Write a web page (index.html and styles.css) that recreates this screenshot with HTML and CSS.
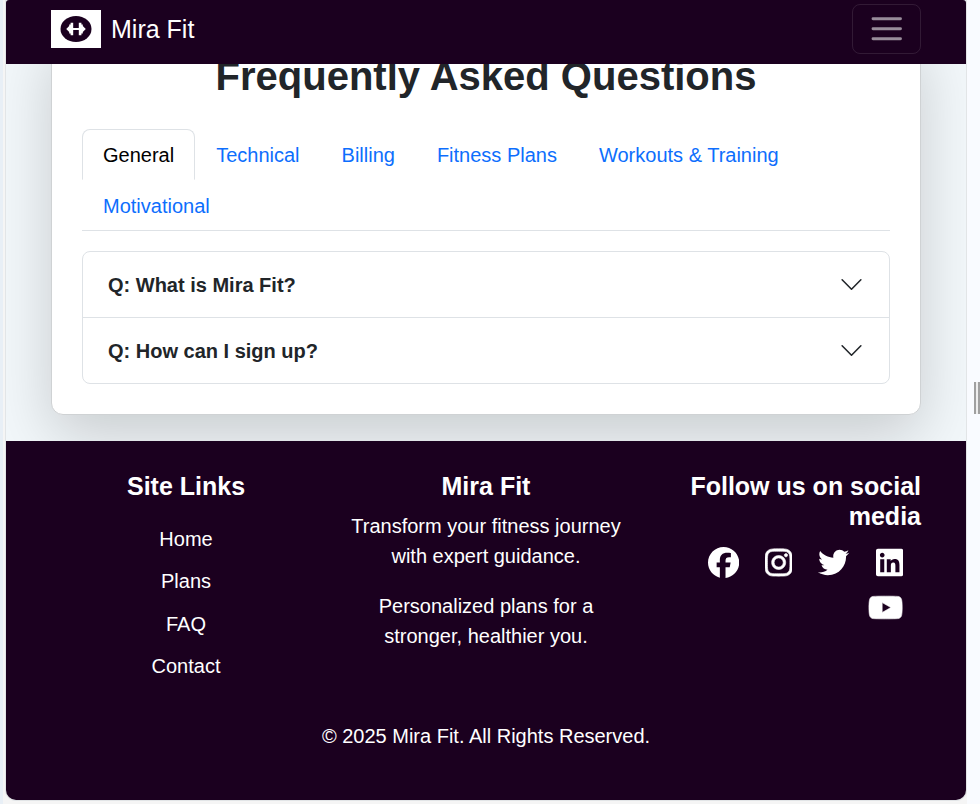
FILE: index.html
```html
<!DOCTYPE html>
<html lang="en">
<head>
<meta charset="utf-8">
<title>Mira Fit</title>
<link rel="stylesheet" href="styles.css">
</head>
<body>
<div class="frame">
  <header class="navbar">
    <a class="brand"><span class="logo"><svg viewBox="0 0 50 38" width="50" height="38"><ellipse cx="25" cy="19" rx="15.5" ry="13"/><path class="bell" d="M15.2 19l3-3v-1.5h1.4v-1.7h2.6v5.2h5.6v-5.2h2.6v1.7h1.4v1.5l3 3-3 3v1.5h-1.4v1.7h-2.6v-5.2h-5.6v5.2h-2.6v-1.7h-1.4v-1.5z"/></svg></span><span>Mira Fit</span></a>
    <button class="toggler" aria-label="Menu"><svg viewBox="0 0 30 30" width="37.5" height="37.5"><path d="M4 7h22M4 15h22M4 23h22"/></svg></button>
  </header>
  <main class="content">
    <section class="card">
      <h2>Frequently Asked Questions</h2>
      <nav class="tabs"><a class="tab active">General</a><a class="tab">Technical</a><a class="tab">Billing</a><a class="tab">Fitness Plans</a><a class="tab">Workouts &amp; Training</a><a class="tab">Motivational</a></nav>
      <div class="accordion">
        <div class="item"><span>Q: What is Mira Fit?</span><svg viewBox="0 0 16 16" width="25" height="25"><path d="m2 5 6 6 6-6"/></svg></div>
        <div class="item"><span>Q: How can I sign up?</span><svg viewBox="0 0 16 16" width="25" height="25"><path d="m2 5 6 6 6-6"/></svg></div>
      </div>
    </section>
  </main>
  <footer class="footer">
    <div class="columns">
      <div class="col">
        <h5>Site Links</h5>
        <ul><li>Home</li><li>Plans</li><li>FAQ</li><li>Contact</li></ul>
      </div>
      <div class="col">
        <h5>Mira Fit</h5>
        <p>Transform your fitness journey with expert guidance.</p>
        <p>Personalized plans for a stronger, healthier you.</p>
      </div>
      <div class="col social">
        <h5>Follow us on social media</h5>
        <div class="icons">
          <svg viewBox="0 0 512 512" width="31.25"><path d="M512 256C512 114.6 397.4 0 256 0S0 114.6 0 256C0 376 82.7 476.8 194.2 504.5V334.2H141.4V256h52.8V222.3c0-87.1 39.4-127.5 125-127.5 16.2 0 44.2 3.2 55.7 6.4V172c-6-.6-16.5-1-29.6-1-42 0-58.2 15.9-58.2 57.2V256h83.6l-14.4 78.2H287V510.1C413.8 494.8 512 386.9 512 256z"/></svg>
          <svg class="bold" viewBox="0 0 448 512" width="27.34"><path d="M224.1 141c-63.6 0-114.9 51.3-114.9 114.9s51.3 114.9 114.9 114.9S339 319.5 339 255.9 287.7 141 224.1 141zm0 189.6c-41.1 0-74.7-33.5-74.7-74.7s33.5-74.7 74.7-74.7 74.7 33.5 74.7 74.7-33.6 74.7-74.7 74.7zm146.4-194.3c0 14.9-12 26.8-26.8 26.8-14.9 0-26.8-12-26.8-26.8s12-26.8 26.8-26.8 26.8 12 26.8 26.8zm76.1 27.2c-1.7-35.9-9.9-67.7-36.2-93.9-26.2-26.2-58-34.4-93.9-36.2-37-2.1-147.9-2.1-184.9 0-35.8 1.7-67.6 9.9-93.9 36.1s-34.4 58-36.2 93.9c-2.1 37-2.1 147.9 0 184.9 1.7 35.9 9.9 67.7 36.2 93.9s58 34.4 93.9 36.2c37 2.1 147.9 2.1 184.9 0 35.9-1.7 67.7-9.9 93.9-36.2 26.2-26.2 34.4-58 36.2-93.9 2.1-37 2.1-147.8 0-184.8zM398.8 388c-7.8 19.6-22.9 34.7-42.6 42.6-29.5 11.7-99.5 9-132.1 9s-102.7 2.6-132.1-9c-19.6-7.8-34.7-22.9-42.6-42.6-11.7-29.5-9-99.5-9-132.1s-2.6-102.7 9-132.1c7.8-19.6 22.9-34.7 42.6-42.6 29.5-11.7 99.5-9 132.1-9s102.7-2.6 132.1 9c19.6 7.8 34.7 22.9 42.6 42.6 11.7 29.5 9 99.5 9 132.1s2.7 102.7-9 132.1z"/></svg>
          <svg viewBox="0 0 512 512" width="31.25"><path d="M459.37 151.716c.325 4.548.325 9.097.325 13.645 0 138.72-105.583 298.558-298.558 298.558-59.452 0-114.68-17.219-161.137-47.106 8.447.974 16.568 1.299 25.34 1.299 49.055 0 94.213-16.568 130.274-44.832-46.132-.975-84.792-31.188-98.112-72.772 6.498.974 12.995 1.624 19.818 1.624 9.421 0 18.843-1.3 27.614-3.573-48.081-9.747-84.143-51.98-84.143-102.985v-1.299c13.969 7.797 30.214 12.67 47.431 13.319-28.264-18.843-46.781-51.005-46.781-87.391 0-19.492 5.197-37.36 14.294-52.954 51.655 63.675 129.3 105.258 216.365 109.807-1.624-7.797-2.599-15.918-2.599-24.04 0-57.828 46.782-104.934 104.934-104.934 30.213 0 57.502 12.67 76.67 33.137 23.715-4.548 46.456-13.32 66.599-25.34-7.798 24.366-24.366 44.833-46.132 57.827 21.117-2.273 41.584-8.122 60.426-16.243-14.292 20.791-32.161 39.308-52.628 54.253z"/></svg>
          <svg viewBox="0 0 448 512" width="27.34"><path d="M416 32H31.9C14.3 32 0 46.5 0 64.3v383.4C0 465.5 14.3 480 31.9 480H416c17.6 0 32-14.5 32-32.3V64.3c0-17.8-14.4-32.3-32-32.3zM135.4 416H69V202.2h66.5V416zm-33.2-243c-21.3 0-38.5-17.3-38.5-38.5S80.9 96 102.2 96c21.2 0 38.5 17.3 38.5 38.5 0 21.3-17.2 38.5-38.5 38.5zm282.1 243h-66.4V312c0-24.8-.5-56.7-34.5-56.7-34.6 0-39.9 27-39.9 54.9V416h-66.4V202.2h63.7v29.2h.9c8.9-16.8 30.6-34.5 62.9-34.5 67.2 0 79.7 44.3 79.7 101.9V416z"/></svg>
          <svg class="bold" viewBox="0 0 576 512" width="35.16"><path d="M549.655 124.083c-6.281-23.65-24.787-42.276-48.284-48.597C458.781 70 288 70 288 70S117.22 70 74.629 75.486c-23.497 6.322-42.003 24.947-48.284 48.597-11.412 42.867-11.412 132.305-11.412 132.305s0 89.438 11.412 132.305c6.281 23.65 24.787 41.5 48.284 47.821C117.22 442 288 442 288 442s170.78 0 213.371-5.486c23.497-6.321 42.003-24.171 48.284-47.821 11.412-42.867 11.412-132.305 11.412-132.305s0-89.438-11.412-132.305zm-317.51 213.508V175.185l142.739 81.205-142.739 81.201z"/></svg>
        </div>
      </div>
    </div>
    <p class="copyright">© 2025 Mira Fit. All Rights Reserved.</p>
  </footer>
</div>
<div class="handle"></div>
</body>
</html>
```
FILE: styles.css
```css
* { box-sizing: border-box; }
html, body { height: 100%; }
body {
  margin: 0;
  overflow: hidden;
  background: linear-gradient(to right, #e8eff6 0 3px, #f5f5f5 3px 967px, #f9fbff 967px);
  font: 20px/30px "Liberation Sans", Arial, sans-serif;
  color: #212529;
}
h2, h5, p, ul { margin: 0; padding: 0; }
.frame {
  width: 962px;
  height: 801px;
  margin-left: 5px;
  border: 1px solid #e2e5e7;
  border-top: 0;
  border-radius: 0 0 11px 11px;
  overflow: hidden;
  background: #f2f7fa;
}
.navbar {
  position: relative;
  z-index: 2;
  display: flex;
  justify-content: space-between;
  align-items: flex-start;
  height: 64px;
  padding: 4px 45px 0;
  background: #1b001f;
  border-radius: 3px 3px 0 0;
}
.brand { display: flex; align-items: center; gap: 10px; height: 50px; color: #fff; font-size: 25px; }
.logo { display: flex; background: #fff; }
.logo ellipse { fill: #1b001f; }
.logo .bell { fill: #fff; }
.toggler {
  display: flex;
  align-items: center;
  justify-content: center;
  width: 69px;
  height: 50px;
  padding: 0;
  background: none;
  border: 1px solid rgba(255, 255, 255, .1);
  border-radius: 8px;
}
.toggler path { stroke: rgba(255, 255, 255, .55); stroke-width: 2.3; stroke-linecap: round; }
.content { display: flow-root; height: 377px; padding: 0 45px; }
.card {
  height: 381px;
  margin-top: -30px;
  padding: 17px 30px 30px;
  background: #fff;
  border: 1px solid #cfd2d4;
  border-radius: 12px;
  box-shadow: 0 20px 60px rgba(0, 0, 0, .175);
}
h2 { font-size: 40px; line-height: 48px; text-align: center; }
.tabs { display: flex; flex-wrap: wrap; height: 102px; margin-top: 29px; border-bottom: 1px solid #dee2e6; }
.tab { height: 51px; padding: 10px 20px; border: 1px solid transparent; color: #0d6efd; }
.tab.active { color: #000; border-color: #dee2e6 #dee2e6 transparent; border-radius: 8px 8px 0 0; }
.accordion { margin-top: 20px; border: 1px solid #dee2e6; border-radius: 8px; }
.item { display: flex; justify-content: space-between; align-items: center; height: 65px; padding: 0 25px; font-weight: 700; }
.item + .item { height: 66px; border-top: 1px solid #dee2e6; }
.item path { fill: none; stroke: #212529; stroke-width: 1; stroke-linecap: round; stroke-linejoin: round; }
.footer { position: relative; z-index: 1; height: 360px; padding: 30px 45px; background: #1b001f; color: #fff; text-align: center; }
.columns { display: grid; grid-template-columns: repeat(3, 270px); gap: 30px; height: 250px; }
h5 { font-size: 25px; line-height: 30px; margin-bottom: 10px; }
ul { list-style: none; margin-top: 22.8px; }
li { margin-bottom: 12.4px; }
.col p { margin-bottom: 20px; }
.social { text-align: right; }
.social h5 { margin-bottom: 9px; }
.icons { display: flex; flex-wrap: wrap; justify-content: flex-end; column-gap: 26.1px; padding: 0 18px 0 10px; }
.icons svg { height: 45px; fill: #fff; }
.icons .bold { stroke: #fff; stroke-width: 10; }
.copyright { line-height: 30px; }
.handle { position: absolute; left: 974px; top: 382px; width: 6px; height: 32px; background: linear-gradient(to right, #a0a0a0 0 2px, #eee 2px 4px, #a0a0a0 4px); }
```
